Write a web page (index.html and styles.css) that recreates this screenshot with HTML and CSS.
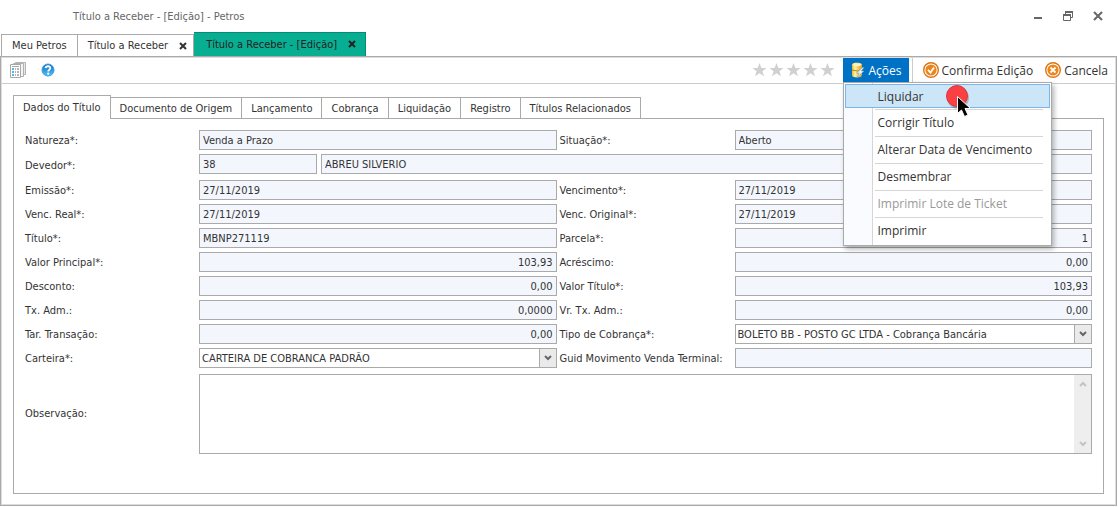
FILE: index.html
```html
<!DOCTYPE html>
<html lang="pt-BR">
<head>
    <meta charset="UTF-8">
    <meta name="viewport" content="width=device-width, initial-scale=1.0">
    <title>Título a Receber - [Edição] - Petros</title>
    <link rel="stylesheet" href="styles.css">
</head>
<body>
    <header class="titlebar">
        <h1>Título a Receber - [Edição] - Petros</h1>
        <div class="window-buttons">
            <button type="button" aria-label="Minimizar"><svg width="12" height="12" viewBox="0 0 12 12"><path d="M2 7h8v2H2z" fill="#666"/></svg></button>
            <button type="button" aria-label="Restaurar"><svg width="12" height="12" viewBox="0 0 12 12"><path d="M3.5 4V1.5h7v6H9M1.5 4.500h7v6h-7z" fill="none" stroke="#666"/><path d="M3 1h8v2H3zM1 4h8v2H1z" fill="#666"/></svg></button>
            <button type="button" aria-label="Fechar"><svg width="12" height="12" viewBox="0 0 12 12"><path d="M2 2l8 8M10 2l-8 8" stroke="#666" stroke-width="2"/></svg></button>
        </div>
    </header>

    <nav class="page-tabs">
        <div class="page-tab"><a href="#">Meu Petros</a></div>
        <div class="page-tab">
            <a href="#">Título a Receber</a>
            <button type="button" aria-label="Fechar aba"><svg width="10" height="10" viewBox="0 0 10 10"><path d="M2 2l6 6M8 2l-6 6" stroke="#333" stroke-width="2"/></svg></button>
        </div>
        <div class="page-tab active">
            <a href="#">Título a Receber - [Edição]</a>
            <button type="button" aria-label="Fechar aba"><svg width="10" height="10" viewBox="0 0 10 10"><path d="M2 2l6 6M8 2l-6 6" stroke="#222" stroke-width="2"/></svg></button>
        </div>
    </nav>

    <main class="window">
        <div class="toolbar">
            <div class="tools">
                <button type="button" aria-label="Relatórios">
                    <svg width="16" height="16" viewBox="0 0 16 16">
                        <path d="M5.500 .5h10v12h-10z" fill="#e8e8e8" stroke="#b5b5b5"/>
                        <path d="M3.500 1.500h10v13h-10z" fill="#f4f4f4" stroke="#b0b0b0"/>
                        <path d="M.5 2.500h10v13H.5z" fill="#fff" stroke="#a8a8a8"/>
                        <path d="M2 4h7v1H2z" fill="#aaa"/>
                        <path d="M2 6h2v8H2z" fill="#59b4e8"/>
                        <path d="M5 6h1v8H5zM7 6h2v8H7z" fill="#b5b5b5"/>
                        <path d="M2 8.500h7M2 11.500h7" stroke="#fff"/>
                    </svg>
                </button>
                <button type="button" aria-label="Ajuda">
                    <svg width="14" height="14" viewBox="0 0 14 14">
                        <defs><linearGradient id="blue" x2="0" y2="1"><stop stop-color="#0969bd"/><stop offset="1" stop-color="#54c4f8"/></linearGradient></defs>
                        <circle cx="7" cy="7" r="6" fill="url(#blue)" stroke="#3b9be0"/>
                        <path d="M4.500 5.200C5 2.500 9.500 2.700 9.300 5.300 9.200 6.700 7.200 6.900 7.200 8.500" fill="none" stroke="#fff" stroke-width="1.800"/>
                        <circle cx="7.200" cy="10.700" r="1.100" fill="#fff"/>
                    </svg>
                </button>
            </div>
            <div class="actions">
                <svg class="stars" width="83" height="14" viewBox="0 0 83 14" fill="#d0d0d0">
                    <defs><path id="star" d="M7.500 0l1.900 5h5.100l-4.100 3.200 1.600 5.100-4.500-3.100L3 13.300l1.600-5.100L.5 5h5.100z"/></defs>
                    <use href="#star"/><use href="#star" x="17"/><use href="#star" x="34"/><use href="#star" x="51"/><use href="#star" x="68"/>
                </svg>
                <div class="dropdown">
                    <button type="button" class="action open">
                        <svg width="16" height="16" viewBox="0 0 16 16">
                            <defs><linearGradient id="gold"><stop stop-color="#e9b62c"/><stop offset=".3" stop-color="#fff3a8"/><stop offset="1" stop-color="#dd9c1c"/></linearGradient></defs>
                            <path d="M2 2.500C2 0 12 0 12 2.500v11c0 2.500-10 2.500-10 0z" fill="url(#gold)"/>
                            <ellipse cx="7" cy="2.700" rx="4.500" ry="1.400" fill="#fff3b0"/>
                            <path d="M2 8q5 2 10 0" fill="none" stroke="#b98512"/>
                            <path d="M12.500 5.500L6.500 11h2.700L7 15.500l7-6.500h-2.700l2.700-3.500z" fill="#e8f3fa" stroke="#6b9cbd" stroke-width=".5"/>
                        </svg>
                        Ações
                    </button>
                    <div class="menu">
                        <button type="button" class="hover">Liquidar</button>
                        <button type="button">Corrigir Título</button>
                        <button type="button">Alterar Data de Vencimento</button>
                        <button type="button">Desmembrar</button>
                        <button type="button" disabled>Imprimir Lote de Ticket</button>
                        <button type="button">Imprimir</button>
                        <svg class="pointer" width="30" height="36" viewBox="0 0 30 36">
                            <circle cx="13" cy="14" r="11" fill="#000" opacity=".2"/>
                            <circle cx="12" cy="12" r="10.500" fill="#fb4044" stroke="#d9363a"/>
                            <path d="M12.500 12.500v17l4-3.500 3 6.500 3.500-1.500-3-6.500h5.500z" fill="#000" stroke="#fff"/>
                        </svg>
                    </div>
                </div>
                <button type="button" class="action confirm">
                    <svg width="16" height="16" viewBox="0 0 16 16">
                        <circle cx="8" cy="8" r="7.300" fill="#fff" stroke="#dc7414" stroke-width="1.400"/>
                        <circle cx="8" cy="8" r="5.600" fill="#ed8519"/>
                        <path d="M5 7.800l2.500 2.700L11 5.500" fill="none" stroke="#fff" stroke-width="1.800"/>
                    </svg>
                    Confirma Edição
                </button>
                <button type="button" class="action">
                    <svg width="16" height="16" viewBox="0 0 16 16">
                        <circle cx="8" cy="8" r="7.300" fill="#fff" stroke="#dc7414" stroke-width="1.400"/>
                        <circle cx="8" cy="8" r="5.600" fill="#ed8519"/>
                        <path d="M5.500 5.500l5 5M10.500 5.500l-5 5" stroke="#fff" stroke-width="1.800"/>
                    </svg>
                    Cancela
                </button>
            </div>
        </div>

        <div class="content">
            <nav class="form-tabs">
                <button type="button" class="active">Dados do Título</button>
                <button type="button">Documento de Origem</button>
                <button type="button">Lançamento</button>
                <button type="button">Cobrança</button>
                <button type="button">Liquidação</button>
                <button type="button">Registro</button>
                <button type="button">Títulos Relacionados</button>
            </nav>
            <form class="panel">
                <label for="natureza">Natureza*:</label>
                <input id="natureza" type="text" value="Venda a Prazo" readonly>
                <label class="second" for="situacao">Situação*:</label>
                <input id="situacao" type="text" value="Aberto" readonly>

                <label for="devedor">Devedor*:</label>
                <div class="debtor">
                    <input id="devedor" type="text" value="38" readonly>
                    <input type="text" value="ABREU SILVERIO" aria-label="Nome do devedor" readonly>
                </div>

                <label for="emissao">Emissão*:</label>
                <input id="emissao" type="text" value="27/11/2019" readonly>
                <label class="second" for="vencimento">Vencimento*:</label>
                <input id="vencimento" type="text" value="27/11/2019" readonly>

                <label for="venc-real">Venc. Real*:</label>
                <input id="venc-real" type="text" value="27/11/2019" readonly>
                <label class="second" for="venc-original">Venc. Original*:</label>
                <input id="venc-original" type="text" value="27/11/2019" readonly>

                <label for="titulo">Título*:</label>
                <input id="titulo" type="text" value="MBNP271119" readonly>
                <label class="second" for="parcela">Parcela*:</label>
                <input id="parcela" class="number" type="text" value="1" readonly>

                <label for="principal">Valor Principal*:</label>
                <input id="principal" class="number" type="text" value="103,93" readonly>
                <label class="second" for="acrescimo">Acréscimo:</label>
                <input id="acrescimo" class="number" type="text" value="0,00" readonly>

                <label for="desconto">Desconto:</label>
                <input id="desconto" class="number" type="text" value="0,00" readonly>
                <label class="second" for="valor">Valor Título*:</label>
                <input id="valor" class="number" type="text" value="103,93" readonly>

                <label for="tx-adm">Tx. Adm.:</label>
                <input id="tx-adm" class="number" type="text" value="0,0000" readonly>
                <label class="second" for="vr-tx-adm">Vr. Tx. Adm.:</label>
                <input id="vr-tx-adm" class="number" type="text" value="0,00" readonly>

                <label for="transacao">Tar. Transação:</label>
                <input id="transacao" class="number" type="text" value="0,00" readonly>
                <label class="second" for="tipo">Tipo de Cobrança*:</label>
                <div class="select">
                    <select id="tipo"><option>BOLETO BB - POSTO GC LTDA - Cobrança Bancária</option></select>
                    <span class="arrow"><svg width="10" height="8" viewBox="0 0 10 8"><path d="M2 2l3 3 3-3" fill="none" stroke="#666" stroke-width="2"/></svg></span>
                </div>

                <label for="carteira">Carteira*:</label>
                <div class="select">
                    <select id="carteira"><option>CARTEIRA DE COBRANCA PADRÃO</option></select>
                    <span class="arrow"><svg width="10" height="8" viewBox="0 0 10 8"><path d="M2 2l3 3 3-3" fill="none" stroke="#666" stroke-width="2"/></svg></span>
                </div>
                <label class="second" for="guid">Guid Movimento Venda Terminal:</label>
                <input id="guid" type="text" readonly>

                <label for="observacao">Observação:</label>
                <div class="notes">
                    <textarea id="observacao"></textarea>
                    <div class="scrollbar">
                        <svg width="10" height="8" viewBox="0 0 10 8"><path d="M2 6l3-3 3 3" fill="none" stroke="#c4c4c4" stroke-width="2"/></svg>
                        <svg width="10" height="8" viewBox="0 0 10 8"><path d="M2 2l3 3 3-3" fill="none" stroke="#c4c4c4" stroke-width="2"/></svg>
                    </div>
                </div>
            </form>
        </div>
    </main>
</body>
</html>
```
FILE: styles.css
```css
* {
    box-sizing: border-box;
}

body {
    font-family: "DejaVu Sans Condensed", "DejaVu Sans", sans-serif;
    font-stretch: condensed;
    font-size: 11px;
    color: #333;
    background-color: #fff;
    margin: 0;
    min-height: 100vh;
    padding: 0 1px 1px 0;
    display: flex;
    flex-direction: column;
}

button, input, select, textarea {
    font: inherit;
    color: inherit;
    margin: 0;
    min-width: 0;
    border-radius: 0;
}

button {
    border: 0;
    padding: 0;
    background: none;
    white-space: nowrap;
}

svg {
    display: block;
    flex-shrink: 0;
}

/* title and open pages */
.titlebar {
    height: 32px;
    padding: 0 13px 0 73px;
    display: flex;
    align-items: center;
    justify-content: space-between;
}

h1 {
    font-size: 11px;
    font-weight: normal;
    color: #666;
    margin: 0;
}

.window-buttons {
    display: flex;
    gap: 18px;
}

.page-tabs {
    height: 24px;
    padding-left: 1px;
    display: flex;
    align-items: flex-end;
}

.page-tab {
    height: 22px;
    padding: 0 5px 0 10px;
    border: 1px solid #aaa;
    border-bottom: 0;
    border-left-width: 0;
    display: flex;
    align-items: center;
    gap: 10px;
}

.page-tab:first-child {
    border-left-width: 1px;
    padding-right: 10px;
}

.page-tab a {
    color: inherit;
    text-decoration: none;
}

.page-tab.active {
    height: 24px;
    padding-left: 12px;
    padding-right: 8px;
    padding-bottom: 1px;
    color: #222;
    background-color: #08ae91;
    border-color: #078a72;
}

/* main window */
.window {
    flex: 1;
    border: 1px solid #aaa;
    outline: 1px solid #ddd;
    outline-offset: -2px;
    display: flex;
    flex-direction: column;
}

.toolbar {
    height: 27px;
    padding: 1px 6px 1px 9px;
    border-bottom: 1px solid #ccc;
    display: flex;
    justify-content: space-between;
    font-family: "Open Sans", sans-serif;
    font-stretch: normal;
    font-size: 12px;
}

.tools, .actions, .action {
    display: flex;
    align-items: center;
}

.tools {
    gap: 15px;
}

.stars {
    margin-right: 8px;
}

.dropdown {
    position: relative;
    margin-right: 3px;
}

.action {
    height: 24px;
    padding: 0 6px;
    gap: 3px;
}

.action:last-child {
    padding-right: 2px;
}

.action.open {
    padding: 0 7px;
    color: #fff;
    background-color: #0072c6;
}

.action.confirm {
    border-left: 1px solid #ccc;
    padding-left: 10px;
}

.menu {
    position: absolute;
    z-index: 1;
    top: 24px;
    left: 0;
    width: 209px;
    padding: 1px;
    border: 1px solid #aaa;
    background: linear-gradient(to right, #f9fbfe 28px, #d5d5d5 28px, #d5d5d5 29px, #fff 29px);
    box-shadow: 2px 3px 5px rgba(0, 0, 0, 0.3);
}

.menu button {
    display: block;
    width: 100%;
    height: 27px;
    padding-left: 33px;
    text-align: left;
    background: linear-gradient(#d5d5d5, #d5d5d5) 30px 0 / 168px 1px no-repeat;
}

.menu button:disabled {
    color: #999;
}

.menu button.hover {
    height: 24px;
    padding-left: 32px;
    margin-bottom: 1px;
    border: 1px solid #7eb4ea;
    background: #cde6f7;
}

.pointer {
    position: absolute;
    left: 101px;
    top: 1px;
}

/* form */
.content {
    flex: 1;
    padding: 11px 12px;
    display: flex;
    flex-direction: column;
}

.form-tabs {
    display: flex;
    align-items: flex-end;
    height: 23px;
    position: relative;
}

.form-tabs button {
    height: 21px;
    padding: 0 9px;
    border: 1px solid #aaa;
    border-left-width: 0;
    border-bottom: 0;
}

.form-tabs button.active {
    height: 24px;
    border-left-width: 1px;
    background-color: #fff;
    margin-bottom: -1px;
    padding-bottom: 1px;
}

.panel {
    flex: 1;
    border: 1px solid #aaa;
    padding: 11px;
    display: grid;
    grid-template-columns: 174px minmax(0, 1fr) 178px minmax(0, 1fr);
    align-content: start;
    align-items: center;
    row-gap: 4px;
}

.panel label {
    white-space: nowrap;
}

.panel .second {
    padding-left: 3px;
}

.panel input, .panel select {
    width: 100%;
    height: 20px;
    padding: 0 3px;
    border: 1px solid #aaa;
    background-color: #f3f7fd;
}

.panel .number {
    text-align: right;
}

.debtor {
    grid-column: 2 / 5;
    display: grid;
    grid-template-columns: 118px 1fr;
    gap: 4px;
    margin-bottom: 2px;
}

.select {
    display: flex;
    border: 1px solid #aaa;
    height: 20px;
}

.panel select {
    appearance: none;
    height: 18px;
    padding: 0 2px;
    border: 0;
    background-color: #fff;
}

.arrow {
    width: 17px;
    flex-shrink: 0;
    border-left: 1px solid #aaa;
    background-color: #eaeaea;
    display: flex;
    align-items: center;
    justify-content: center;
}

.notes {
    grid-column: 2 / 5;
    height: 80px;
    margin-top: 2px;
    border: 1px solid #aaa;
    display: flex;
}

.notes textarea {
    flex: 1;
    border: 0;
    resize: none;
    padding: 3px;
}

.scrollbar {
    width: 17px;
    padding: 5px 0;
    background-color: #eee;
    display: flex;
    flex-direction: column;
    align-items: center;
    justify-content: space-between;
}
```
